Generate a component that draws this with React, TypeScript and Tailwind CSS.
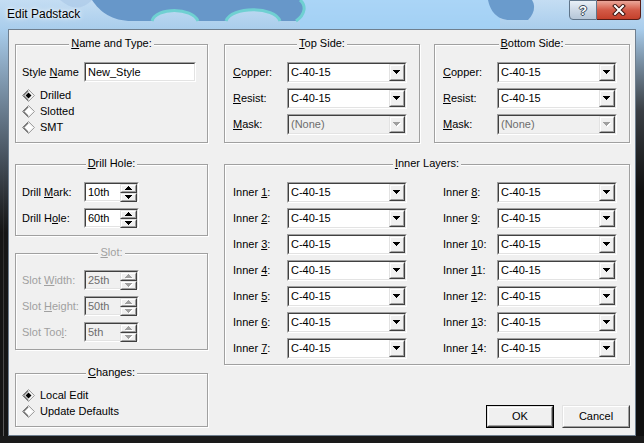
import React from "react";

const FONT = "font-['Liberation_Sans',Arial,sans-serif] text-[11px] leading-[13px]";

function Acc({ text }: { text: string }) {
  const i = text.indexOf("&");
  if (i < 0) return <>{text}</>;
  return (
    <>
      {text.slice(0, i)}
      <u className="underline-offset-[1px]">{text[i + 1]}</u>
      {text.slice(i + 2)}
    </>
  );
}

function Group({
  title,
  disabled,
  className = "",
  children,
}: {
  title: string;
  disabled?: boolean;
  className?: string;
  children?: React.ReactNode;
}) {
  return (
    <div className={`relative border border-[#a0a0a0] shadow-[inset_1px_1px_0_#fff,1px_1px_0_#fff] ${className}`}>
      <div className="absolute -top-[8px] left-0 right-0 flex justify-center">
        <span className={`bg-[#f0f0f0] px-[2px] ${disabled ? "text-[#a0a0a0]" : "text-black"}`}>
          <Acc text={title} />
        </span>
      </div>
      {children}
    </div>
  );
}

function Sunken({ className = "", children }: { className?: string; children?: React.ReactNode }) {
  return (
    <div className={`border border-t-[#a0a0a0] border-l-[#a0a0a0] border-r-white border-b-white ${className}`}>
      <div className="flex h-full border border-t-[#404040] border-l-[#404040] border-r-[#e3e3e3] border-b-[#e3e3e3]">
        {children}
      </div>
    </div>
  );
}

function Raised({ className = "", children }: { className?: string; children?: React.ReactNode }) {
  return (
    <div className={`border border-t-[#e3e3e3] border-l-[#e3e3e3] border-r-[#404040] border-b-[#404040] ${className}`}>
      <div className="flex h-full items-center justify-center border border-t-white border-l-white border-r-[#a0a0a0] border-b-[#a0a0a0] bg-[#f0f0f0]">
        {children}
      </div>
    </div>
  );
}

// pixel triangles
function Down({ w = 7, off }: { w?: number; off?: boolean }) {
  const rows = Math.ceil(w / 2);
  const rs = Array.from({ length: rows }, (_, i) => i);
  return (
    <svg width={w + 1} height={rows + 1} shapeRendering="crispEdges">
      {off && rs.map((i) => <rect key={"s" + i} x={i + 1} y={i + 1} width={w - 2 * i} height={1} fill="#fff" />)}
      {rs.map((i) => (
        <rect key={i} x={i} y={i} width={w - 2 * i} height={1} fill={off ? "#a0a0a0" : "#000"} />
      ))}
    </svg>
  );
}

function Up({ w = 5, off }: { w?: number; off?: boolean }) {
  const rows = Math.ceil(w / 2);
  const rs = Array.from({ length: rows }, (_, i) => i);
  return (
    <svg width={w + 1} height={rows + 1} shapeRendering="crispEdges">
      {off && rs.map((i) => <rect key={"s" + i} x={i + 1} y={rows - i} width={w - 2 * i} height={1} fill="#fff" />)}
      {rs.map((i) => (
        <rect key={i} x={i} y={rows - 1 - i} width={w - 2 * i} height={1} fill={off ? "#a0a0a0" : "#000"} />
      ))}
    </svg>
  );
}

function Combo({ value = "C-40-15", disabled }: { value?: string; disabled?: boolean }) {
  return (
    <Sunken className="h-[21px] w-[120px]">
      <div
        className={`flex flex-1 items-center pl-[2px] ${
          disabled ? "bg-[#f0f0f0] text-[#6d6d6d]" : "bg-white text-black"
        }`}
      >
        {value}
      </div>
      <Raised className="w-[16px]">
        <Down off={disabled} />
      </Raised>
    </Sunken>
  );
}

function Spin({ value, disabled }: { value: string; disabled?: boolean }) {
  return (
    <Sunken className="h-[20px] w-[55px]">
      <div
        className={`flex flex-1 items-center pl-[2px] ${
          disabled ? "bg-[#f0f0f0] text-[#6d6d6d]" : "bg-white text-black"
        }`}
      >
        {value}
      </div>
      <div className="flex w-[17px] flex-col">
        <Raised className="flex-1">
          <Up w={7} off={disabled} />
        </Raised>
        <Raised className="flex-1">
          <Down w={7} off={disabled} />
        </Raised>
      </div>
    </Sunken>
  );
}

function Radio({ label, checked }: { label: string; checked?: boolean }) {
  return (
    <div className="flex h-[16px] items-center">
      <svg width="13" height="13" className="mr-[5px]">
        <polygon points="6.5,1 12,6.5 6.5,12 1,6.5" fill="#fff" />
        <polyline points="6.5,0.5 0.5,6.5 6.5,12.5" fill="none" stroke="#808080" />
        <polyline points="6.5,1.8 1.8,6.5 6.5,11.2" fill="none" stroke="#404040" />
        <polyline points="6.5,0.5 12.5,6.5 6.5,12.5" fill="none" stroke="#a0a0a0" />
        <polyline points="6.5,1.8 11.2,6.5 6.5,11.2" fill="none" stroke="#e8e8e8" />
        {checked && <polygon points="6.5,3.5 9.5,6.5 6.5,9.5 3.5,6.5" fill="#000" />}
      </svg>
      <span>{label}</span>
    </div>
  );
}

function Row({
  label,
  lw,
  disabled,
  children,
}: {
  label: string;
  lw: string;
  disabled?: boolean;
  children: React.ReactNode;
}) {
  return (
    <div className="flex items-center">
      <span className={`${lw} ${disabled ? "text-[#a0a0a0]" : ""}`}>
        <Acc text={label} />
      </span>
      {children}
    </div>
  );
}

function Btn({ label, def }: { label: string; def?: boolean }) {
  return (
    <div className={`h-[23px] w-[68px] ${def ? "border border-black" : ""}`}>
      <Raised className="h-full">
        <span>{label}</span>
      </Raised>
    </div>
  );
}

const inner = [
  "Inner &1:",
  "Inner &2:",
  "Inner &3:",
  "Inner &4:",
  "Inner &5:",
  "Inner &6:",
  "Inner &7:",
  "Inner &8:",
  "Inner &9:",
  "Inner &10:",
  "Inner &11:",
  "Inner &12:",
  "Inner &13:",
  "Inner &14:",
];

function TitleBar() {
  return (
    <div className="relative flex h-[29px] items-start bg-gradient-to-b from-[#c4ddf3] to-[#a9cdec]">
      <svg className="absolute inset-0" width="644" height="29">
        <rect x="300" y="0" width="200" height="29" fill="#9fd2f8" opacity="0.7" />
        <path
          d="M92,0 C100,12 112,21 132,21 L152,21 C156,7 192,7 198,21 L226,21 C231,6 275,6 280,21 L296,21 C306,14 306,5 300,0 Z"
          fill="#6797c9"
        />
        <path d="M152,21 C156,7 192,7 198,21" fill="none" stroke="#6fd0d2" strokeWidth="3" />
        <path d="M226,21 C231,6 275,6 280,21" fill="none" stroke="#6fd0d2" strokeWidth="3" />
        <path d="M296,21 C306,14 306,5 300,0" fill="none" stroke="#6fd0d2" strokeWidth="3" />
        <path d="M488,0 C490,10 496,20 510,20 L528,20 C534,14 536,6 532,0 Z" fill="#6a9bcc" />
        <path d="M60,0 C70,8 80,12 92,0" fill="#a8c6e6" opacity="0.6" />
      </svg>
      <span className="relative ml-[7px] mt-[7px] font-['Liberation_Sans',Arial,sans-serif] text-[12px] leading-[15px] text-black [text-shadow:0_0_6px_#fff,0_0_3px_#fff]">
        Edit Padstack
      </span>
      <div className="relative ml-auto mr-[3px] flex">
        <div className="flex h-[20px] w-[28px] items-center justify-center rounded-bl-[4px] border border-[#5f7489] bg-gradient-to-b from-[#e9f0f7] via-[#cdd9e6] to-[#b5c6d8]">
          <span className="font-['Liberation_Sans',Arial,sans-serif] text-[13px] font-bold leading-none text-white [text-shadow:1px_0_0_#384858,-1px_0_0_#384858,0_1px_0_#384858,0_-1px_0_#384858]">
            ?
          </span>
        </div>
        <div className="flex h-[20px] w-[44px] items-center justify-center rounded-br-[4px] border border-l-0 border-[#5a1d17] bg-gradient-to-b from-[#eaa79a] via-[#d35a47] to-[#c5402b]">
          <svg width="14" height="12">
            <path d="M3,2 L11,10 M11,2 L3,10" stroke="#3b1510" strokeWidth="4" strokeLinecap="square" />
            <path d="M3,2 L11,10 M11,2 L3,10" stroke="#fff" strokeWidth="2" strokeLinecap="square" />
          </svg>
        </div>
      </div>
    </div>
  );
}

export default function App() {
  return (
    <div className={`flex h-[443px] w-[644px] flex-col overflow-hidden bg-[#1c1c1c] ${FONT}`}>
      <TitleBar />
      <div className="flex flex-1">
        <div className="w-[8px] bg-gradient-to-b from-[#a9cdec] via-[#4c5865] via-30% to-[#151515] to-50%">
          <div className="ml-[3px] h-full w-[1px] bg-gradient-to-b from-transparent via-transparent via-30% to-[#5b5b5b]" />
        </div>
        <div className="flex-1 border border-[#6f7f8f] bg-[#f0f0f0] text-black">
          <div className="flex gap-[16px] pl-[6px] pt-[14px]">
            {/* left column */}
            <div className="flex w-[193px] flex-col">
              <Group title="&Name and Type:" className="h-[99px] pl-[6px] pt-[17px]">
                <Row label="Style &Name" lw="w-[62px]">
                  <Sunken className="h-[20px] w-[112px]">
                    <div className="flex flex-1 items-center bg-white pl-[2px]">New_Style</div>
                  </Sunken>
                </Row>
                <div className="mt-[5px]">
                  <Radio label="Drilled" checked />
                  <Radio label="Slotted" />
                  <Radio label="SMT" />
                </div>
              </Group>

              <Group title="&Drill Hole:" className="mt-[21px] flex h-[72px] flex-col gap-[6px] pl-[6px] pt-[17px]">
                <Row label="Drill &Mark:" lw="w-[62px]">
                  <Spin value="10th" />
                </Row>
                <Row label="Drill H&ole:" lw="w-[62px]">
                  <Spin value="60th" />
                </Row>
              </Group>

              <Group title="&Slot:" disabled className="mt-[17px] flex h-[97px] flex-col gap-[6px] pl-[6px] pt-[16px]">
                <Row label="Slot &Width:" lw="w-[62px]" disabled>
                  <Spin value="25th" disabled />
                </Row>
                <Row label="Slot &Height:" lw="w-[62px]" disabled>
                  <Spin value="50th" disabled />
                </Row>
                <Row label="Slot Too&l:" lw="w-[62px]" disabled>
                  <Spin value="5th" disabled />
                </Row>
              </Group>

              <Group title="&Changes:" className="mt-[23px] h-[54px] pl-[6px] pt-[13px]">
                <Radio label="Local Edit" checked />
                <Radio label="Update Defaults" />
              </Group>
            </div>

            {/* right column */}
            <div className="flex w-[406px] flex-col">
              <div className="flex gap-[14px]">
                {["&Top Side:", "&Bottom Side:"].map((t) => (
                  <Group key={t} title={t} className="flex h-[99px] w-[196px] flex-col gap-[5px] pl-[8px] pt-[17px]">
                    <Row label="&Copper:" lw="w-[54px]">
                      <Combo />
                    </Row>
                    <Row label="&Resist:" lw="w-[54px]">
                      <Combo />
                    </Row>
                    <Row label="&Mask:" lw="w-[54px]">
                      <Combo value="(None)" disabled />
                    </Row>
                  </Group>
                ))}
              </div>

              <Group title="&Inner Layers:" className="mt-[21px] h-[201px] pl-[8px] pt-[17px]">
                <div className="grid grid-flow-col grid-cols-[174px_174px] grid-rows-7 gap-x-[36px] gap-y-[5px]">
                  {inner.map((l) => (
                    <Row key={l} label={l} lw="w-[54px]">
                      <Combo />
                    </Row>
                  ))}
                </div>
              </Group>

              <div className="mt-[40px] flex justify-end gap-[8px]">
                <Btn label="OK" def />
                <Btn label="Cancel" />
              </div>
            </div>
          </div>
        </div>
        <div className="w-[8px] bg-gradient-to-b from-[#a9cdec] via-[#3a3f45] via-20% to-[#101010] to-40%" />
      </div>
      <div className="h-[7px] bg-[#1a1a1a]" />
    </div>
  );
}
